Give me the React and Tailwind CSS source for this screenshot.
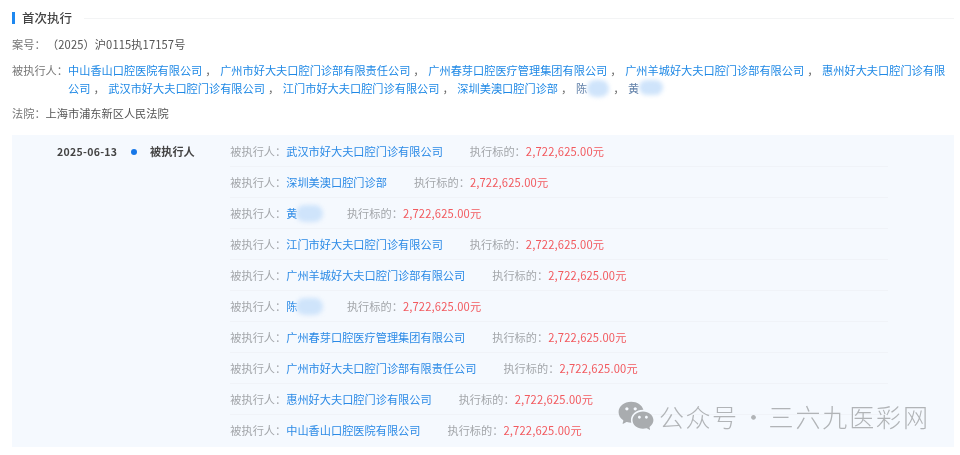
import { RiWechatFill } from 'react-icons/ri';

const companies = [
  '中山香山口腔医院有限公司',
  '广州市好大夫口腔门诊部有限责任公司',
  '广州春芽口腔医疗管理集团有限公司',
  '广州羊城好大夫口腔门诊部有限公司',
  '惠州好大夫口腔门诊有限公司',
  '武汉市好大夫口腔门诊有限公司',
  '江门市好大夫口腔门诊有限公司',
  '深圳美澳口腔门诊部',
];

const rows = [
  '武汉市好大夫口腔门诊有限公司',
  '深圳美澳口腔门诊部',
  '黄',
  '江门市好大夫口腔门诊有限公司',
  '广州羊城好大夫口腔门诊部有限公司',
  '陈',
  '广州春芽口腔医疗管理集团有限公司',
  '广州市好大夫口腔门诊部有限责任公司',
  '惠州好大夫口腔门诊有限公司',
  '中山香山口腔医院有限公司',
];

// mosaic smudge that hides a person's name
const Smudge = ({ className }) => (
  <span className={`absolute rounded-full bg-[#cfe4fb] blur-[2px] ${className}`} />
);

const App = () => {
  return (
    <div
      className="relative h-[455px] w-[960px] overflow-hidden bg-white pt-[9px] pr-[6px] pl-3 text-[11.2px] leading-[23px] text-[#777] antialiased blur-[0.25px]"
      style={{ fontFamily: '"Noto Sans CJK SC", "Noto Sans", sans-serif' }}
    >
      {/* Section title */}
      <div className="flex items-center">
        <div className="h-3 w-[3px] bg-[#1e88f0]" />
        <h3 className="ml-[7px] text-[12.5px] leading-[18px] font-medium text-[#444]">首次执行</h3>
        <div className="ml-3 h-px flex-1 bg-[#f3f4f5]" />
      </div>

      {/* Case info */}
      <div className="mt-[6px]">
        案号：<span className="ml-[7px] tracking-[0.1px] text-[#555]">（2025）沪0115执17157号</span>
      </div>
      <div className="mt-[5px] flex leading-[18px]">
        <span className="w-14 shrink-0">被执行人：</span>
        <div className="w-[880px] text-[#1e88e5]">
          {companies.map((name) => (
            <span key={name}>
              {name}
              <span className="mr-[3.7px] ml-[3px] text-[#666]">，</span>
            </span>
          ))}
          <span className="text-[#5f7fa8]">
            陈
            <span className="relative inline-block w-[23px]">
              <Smudge className="top-[-13px] left-0 h-[17px] w-[22px]" />
            </span>
          </span>
          <span className="mr-[3.7px] ml-[3px] text-[#666]">，</span>
          <span className="text-[#5f7fa8]">
            黄
            <span className="relative inline-block w-[23px]">
              <Smudge className="top-[-13px] left-0 h-[15px] w-[24px]" />
            </span>
          </span>
        </div>
      </div>
      <div className="mt-[5px]">
        法院：<span className="text-[#555]">上海市浦东新区人民法院</span>
      </div>

      {/* Execution record */}
      <div className="mt-[10px] flex h-[312px] bg-[#f5f9fe] pt-[1px]">
        <div className="flex h-[31px] shrink-0 items-center">
          <span className="ml-[45px] w-[60px] text-[10.5px] font-bold tracking-[0.3px] whitespace-nowrap text-[#444]">
            2025-06-13
          </span>
          <span className="ml-[14px] h-[6px] w-[6px] rounded-full bg-[#1677e8]" />
          <span className="ml-[13px] font-bold text-[#444]">被执行人</span>
        </div>
        <div className="ml-[35.5px] w-[658px]">
          {rows.map((name) => (
            <div
              key={name}
              className="relative flex h-[31px] items-center border-b border-[#f0f3f8] last:border-b-0"
            >
              <span className="text-[#a3a6aa]">被执行人：</span>
              <span className="text-[#2b8ae6]">{name}</span>
              {name.length === 1 && (
                <Smudge className="top-[7px] left-[66px] h-[17px] w-[27px]" />
              )}
              <span className={`text-[#a3a6aa] ${name.length === 1 ? 'ml-[49.5px]' : 'ml-[27px]'}`}>执行标的：</span>
              <span className="tracking-[0.15px] text-[#f25a5f]">2,722,625.00元</span>
            </div>
          ))}
        </div>
      </div>

      {/* Account watermark */}
      <div className="absolute top-[397px] left-[617px] flex items-center text-[#b1b4b7]">
        <RiWechatFill className="text-[38px] text-[#a9acaf]" />
        <span className="ml-[4px] text-[25px] leading-[30px] font-light tracking-[1.5px]">公众号</span>
        <span className="w-[30px] text-center text-[25px] leading-[30px] font-light">·</span>
        <span className="text-[25px] leading-[30px] font-light tracking-[1.9px]">三六九医彩网</span>
      </div>
    </div>
  );
};

export default App;
